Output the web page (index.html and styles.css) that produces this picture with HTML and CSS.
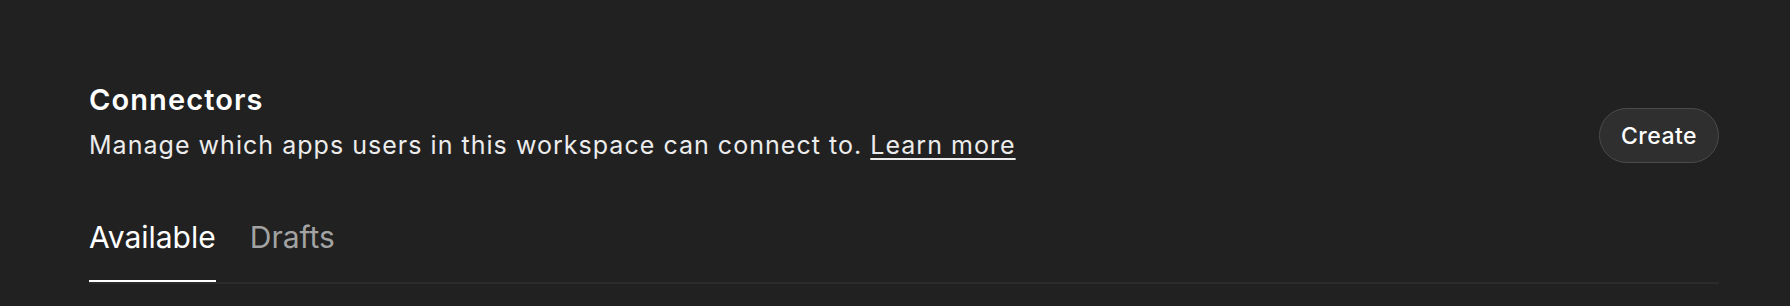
FILE: index.html
```html
<!DOCTYPE html>
<html lang="en">
<head>
<meta charset="utf-8">
<title>Connectors</title>
<link rel="stylesheet" href="styles.css">
</head>
<body>
<main class="page">
  <header class="header">
    <div class="intro">
      <h1 class="title">Connectors</h1>
      <p class="subtitle">Manage which apps users in this workspace can connect to. <a class="link" href="#">Learn more</a></p>
    </div>
    <button class="btn" type="button">Create</button>
  </header>
  <nav class="tabs">
    <a class="tab tab-active" href="#">Available</a>
    <a class="tab" href="#">Drafts</a>
  </nav>
</main>
</body>
</html>
```
FILE: styles.css
```css
html, body {
  margin: 0;
  padding: 0;
  background: #212121;
}
body {
  font-family: Inter, "Noto Sans", sans-serif;
  color: #ffffff;
  -webkit-font-smoothing: antialiased;
}
.page {
  padding: 83px 71px 0 89px;
}
.header {
  display: flex;
  justify-content: space-between;
  align-items: flex-start;
}
.title {
  margin: 0;
  font-size: 29px;
  font-weight: 600;
  line-height: 34px;
  letter-spacing: 1.1px;
}
.subtitle {
  margin: 12px 0 0;
  font-size: 25px;
  line-height: 32px;
  font-weight: 400;
  letter-spacing: 1.03px;
  color: #ececec;
}
.link {
  color: #ececec;
  text-decoration: underline;
  text-underline-offset: 4px;
  text-decoration-thickness: 1.5px;
}
.btn {
  font-family: inherit;
  font-size: 23px;
  font-weight: 500;
  letter-spacing: 0.5px;
  color: #ffffff;
  background: #2f2f2f;
  border: 1.5px solid #4b4b4b;
  border-radius: 999px;
  height: 55px;
  width: 120px;
  padding: 0;
  margin-top: 25px;
}
.tabs {
  display: flex;
  gap: 34px;
  margin-top: 56px;
  border-bottom: 2px solid #2c2c2c;
}
.tab {
  font-size: 30px;
  line-height: 36px;
  padding-bottom: 25px;
  color: #a3a3a3;
  text-decoration: none;
  border-bottom: 2px solid transparent;
}
.tab-active {
  color: #ffffff;
  border-bottom-color: #ffffff;
}
```
